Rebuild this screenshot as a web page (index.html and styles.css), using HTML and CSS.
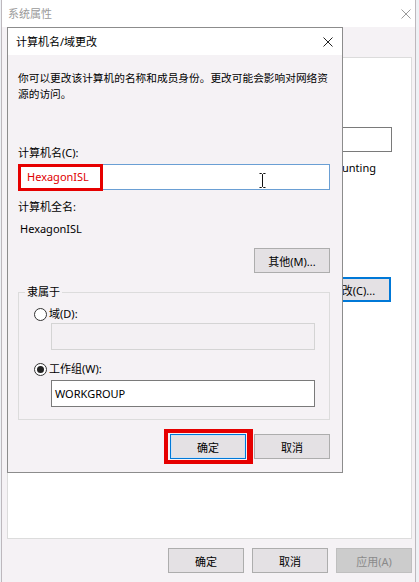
FILE: index.html
```html
<!DOCTYPE html>
<html lang="zh-CN">
<head>
    <meta charset="UTF-8">
    <meta name="viewport" content="width=device-width, initial-scale=1.0">
    <title>系统属性</title>
    <link rel="stylesheet" href="styles.css">
</head>
<body>
    <div class="window">
        <div class="titlebar">
            <span class="title">系统属性</span>
            <svg class="close-icon" width="10" height="10" viewBox="0 0 10 10">
                <path d="M0.5 0.5L9.5 9.5M9.5 0.5L0.5 9.5" stroke="#9a9a9a" stroke-width="1" fill="none"/>
            </svg>
        </div>
        <div class="tabs"></div>
        <div class="panel">
            <div class="panel-input"></div>
            <div class="panel-text">Accounting</div>
            <button class="btn btn-focus">更改(C)...</button>
        </div>
        <div class="footer">
            <button class="btn">确定</button>
            <button class="btn">取消</button>
            <button class="btn" disabled>应用(A)</button>
        </div>

        <!-- dialog on top of the properties window -->
        <div class="dialog">
            <div class="dialog-title">
                <span>计算机名/域更改</span>
                <svg class="close-icon" width="10" height="10" viewBox="0 0 10 10">
                    <path d="M0.5 0.5L9.5 9.5M9.5 0.5L0.5 9.5" stroke="#222" stroke-width="1" fill="none"/>
                </svg>
            </div>
            <div class="dialog-body">
                <p class="intro">你可以更改该计算机的名称和成员身份。更改可能会影响对网络资源的访问。</p>
                <div class="field-label">计算机名(C):</div>
                <div class="textbox textbox-focus name-input">HexagonISL</div>
                <div class="field-label full-label">计算机全名:</div>
                <div class="full-name">HexagonISL</div>
                <div class="row-right">
                    <button class="btn">其他(M)...</button>
                </div>
                <fieldset class="member">
                    <legend>隶属于</legend>
                    <div class="member-inner">
                        <label class="radio"><span class="radio-circle"></span>域(D):</label>
                        <div class="textbox textbox-disabled member-input"></div>
                        <label class="radio radio-second"><span class="radio-circle checked"></span>工作组(W):</label>
                        <div class="textbox member-input workgroup">WORKGROUP</div>
                    </div>
                </fieldset>
                <div class="dialog-buttons">
                    <button class="btn btn-default">确定</button>
                    <button class="btn">取消</button>
                </div>
            </div>

            <svg class="ibeam" width="7" height="15" viewBox="0 0 7 15">
                <path d="M0.5 0.5H2.5L3.5 1.5L4.5 0.5H6.5M3.5 1.5V13.5M0.5 14.5H2.5L3.5 13.5L4.5 14.5H6.5" stroke="#111" stroke-width="1" fill="none"/>
            </svg>
            <div class="mark mark-name"></div>
            <div class="mark mark-ok"></div>
        </div>
    </div>
</body>
</html>
```

FILE: styles.css
```css
* {
    box-sizing: border-box;
}
body {
    margin: 0;
    width: 419px;
    height: 582px;
    overflow: hidden;
    background-color: #eef1f5;
    font-family: "Noto Sans", "Noto Sans CJK SC", sans-serif;
    font-size: 11px;
    line-height: 16px;
    color: #000;
}
.window {
    position: relative;
    width: 415px;
    height: 582px;
    margin-left: 1px;
    border-left: 1px solid #bdb8bd;
    border-right: 1px solid #bdb8bd;
    background-color: #f5f2f5;
}
.titlebar {
    height: 27px;
    display: flex;
    align-items: center;
    justify-content: space-between;
    padding: 0 4px 0 6px;
    background-color: #fff;
}
.title {
    color: #9a9a9a;
}
.tabs {
    height: 30px;
}
.panel {
    height: 482px;
    margin: 0 3px 0 5px;
    padding-right: 19px;
    display: flex;
    flex-direction: column;
    align-items: flex-end;
    background-color: #fff;
    border: 1px solid #dcdcdc;
}
.panel-input {
    width: 150px;
    height: 25px;
    margin-top: 69px;
    border: 1px solid #7a7a7a;
}
.panel-text {
    margin-top: 8px;
    margin-right: 16px;
}
.panel .btn {
    margin-top: 101px;
    margin-right: 1px;
}
.footer {
    display: flex;
    justify-content: flex-end;
    gap: 8px;
    padding: 9px 3px 0 0;
}
.btn {
    width: 76px;
    height: 25px;
    padding: 0;
    font-family: inherit;
    font-size: 11px;
    color: #000;
    background-color: #e4e1e4;
    border: 1px solid #adadad;
}
.btn:disabled {
    color: #8a8a8a;
    background-color: #cccccc;
    border-color: #bfbfbf;
}
.btn-focus {
    border: 2px solid #0078d7;
}
.btn-default {
    border: 1px solid #0078d7;
    box-shadow: inset 0 0 0 1px #cfe2f5;
}
.dialog {
    position: absolute;
    left: 5px;
    top: 27px;
    width: 336px;
    background-color: #f5f2f5;
    border: 1px solid #8c8c8c;
}
.dialog-title {
    height: 27px;
    display: flex;
    align-items: center;
    justify-content: space-between;
    padding: 0 9px 0 8px;
    background-color: #fff;
}
.dialog-body {
    padding: 15px 12px 13px 10px;
}
.intro {
    margin: 0;
    font-size: 10.7px;
}
.field-label {
    margin-top: 43px;
}
.full-label {
    margin-top: 9px;
}
.textbox {
    height: 27px;
    padding: 0 3px;
    display: flex;
    align-items: center;
    background-color: #fff;
    border: 1px solid #7a7a7a;
}
.textbox-focus {
    border-color: #6a9fd4;
}
.textbox-disabled {
    background-color: #f3f0f3;
    border-color: #d4d4d4;
}
.name-input {
    height: 26px;
    margin-top: 3px;
    padding-left: 8px;
    color: #e00000;
}
.full-name {
    margin-top: 6px;
    margin-left: 2px;
}
.row-right {
    display: flex;
    justify-content: flex-end;
    margin-top: 11px;
}
.member {
    margin: 11px 0 0;
    padding: 0;
    border: 1px solid #dcdcdc;
}
.member legend {
    margin-left: 6px;
    padding: 0 2px;
}
.member-inner {
    padding: 6px 14px 12px 15px;
}
.radio {
    display: flex;
    align-items: center;
}
.radio-second {
    margin-top: 11px;
}
.radio-circle {
    width: 13px;
    height: 13px;
    margin-right: 2px;
    border: 1px solid #333;
    border-radius: 50%;
    background-color: #fff;
    display: flex;
    align-items: center;
    justify-content: center;
}
.radio-circle.checked::after {
    content: "";
    width: 7px;
    height: 7px;
    border-radius: 50%;
    background-color: #222;
}
.member-input {
    margin: 1px 0 0 17px;
}
.workgroup {
    margin-top: 3px;
}
.dialog-buttons {
    display: flex;
    justify-content: flex-end;
    gap: 8px;
    margin-top: 14px;
}
.ibeam {
    position: absolute;
    left: 251px;
    top: 145px;
}
.mark {
    position: absolute;
    border: 3px solid #e60000;
}
.mark-name {
    left: 10px;
    top: 136px;
    width: 85px;
    height: 27px;
}
.mark-ok {
    left: 156px;
    top: 401px;
    width: 89px;
    height: 35px;
    border-width: 4px 6px 4px 4px;
}
```
